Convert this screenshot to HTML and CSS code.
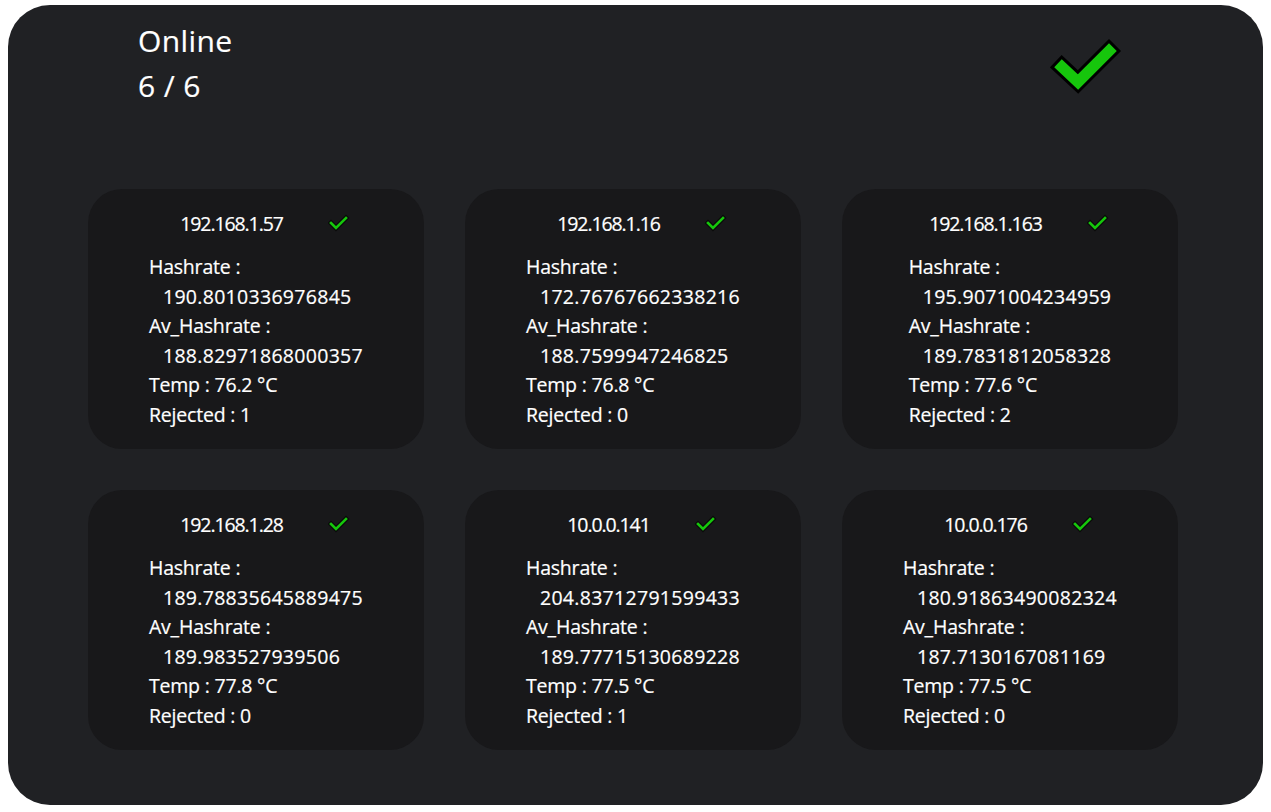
FILE: index.html
```html
<!DOCTYPE html>
<html>
<head>
<meta charset="utf-8">
<link rel="stylesheet" href="styles.css">
</head>
<body>
<div class="panel">
  <div class="top">
    <div class="status">
      <div class="status-label">Online</div>
      <div class="status-count">6 / 6</div>
    </div>
    <svg class="big-check" width="76" height="62" viewBox="0 0 76 62">
      <polyline points="12,30 28,45 59,14" fill="none" stroke="#000" stroke-width="17" stroke-linecap="square" stroke-linejoin="miter"/>
      <polyline points="12,30 28,45 59,14" fill="none" stroke="#16c60c" stroke-width="11" stroke-linecap="square" stroke-linejoin="miter"/>
    </svg>
  </div>
  <div class="grid">
    <div class="card">
      <div class="card-head"><span class="ip">192.168.1.57</span><svg class="chk" width="22" height="18" viewBox="0 0 22 18"><polyline points="3,9 8,14 18,4" fill="none" stroke="#0a0a0a" stroke-width="5" stroke-linecap="square"/><polyline points="3,9 8,14 18,4" fill="none" stroke="#16c60c" stroke-width="2.6" stroke-linecap="square"/></svg></div>
      <div class="card-body">
        <div>Hashrate :</div>
        <div class="val">190.8010336976845</div>
        <div>Av_Hashrate :</div>
        <div class="val">188.82971868000357</div>
        <div>Temp : 76.2 °C</div>
        <div>Rejected : 1</div>
      </div>
    </div>
    <div class="card">
      <div class="card-head"><span class="ip">192.168.1.16</span><svg class="chk" width="22" height="18" viewBox="0 0 22 18"><polyline points="3,9 8,14 18,4" fill="none" stroke="#0a0a0a" stroke-width="5" stroke-linecap="square"/><polyline points="3,9 8,14 18,4" fill="none" stroke="#16c60c" stroke-width="2.6" stroke-linecap="square"/></svg></div>
      <div class="card-body">
        <div>Hashrate :</div>
        <div class="val">172.76767662338216</div>
        <div>Av_Hashrate :</div>
        <div class="val">188.7599947246825</div>
        <div>Temp : 76.8 °C</div>
        <div>Rejected : 0</div>
      </div>
    </div>
    <div class="card">
      <div class="card-head"><span class="ip">192.168.1.163</span><svg class="chk" width="22" height="18" viewBox="0 0 22 18"><polyline points="3,9 8,14 18,4" fill="none" stroke="#0a0a0a" stroke-width="5" stroke-linecap="square"/><polyline points="3,9 8,14 18,4" fill="none" stroke="#16c60c" stroke-width="2.6" stroke-linecap="square"/></svg></div>
      <div class="card-body">
        <div>Hashrate :</div>
        <div class="val">195.9071004234959</div>
        <div>Av_Hashrate :</div>
        <div class="val">189.7831812058328</div>
        <div>Temp : 77.6 °C</div>
        <div>Rejected : 2</div>
      </div>
    </div>
    <div class="card">
      <div class="card-head"><span class="ip">192.168.1.28</span><svg class="chk" width="22" height="18" viewBox="0 0 22 18"><polyline points="3,9 8,14 18,4" fill="none" stroke="#0a0a0a" stroke-width="5" stroke-linecap="square"/><polyline points="3,9 8,14 18,4" fill="none" stroke="#16c60c" stroke-width="2.6" stroke-linecap="square"/></svg></div>
      <div class="card-body">
        <div>Hashrate :</div>
        <div class="val">189.78835645889475</div>
        <div>Av_Hashrate :</div>
        <div class="val">189.983527939506</div>
        <div>Temp : 77.8 °C</div>
        <div>Rejected : 0</div>
      </div>
    </div>
    <div class="card">
      <div class="card-head"><span class="ip">10.0.0.141</span><svg class="chk" width="22" height="18" viewBox="0 0 22 18"><polyline points="3,9 8,14 18,4" fill="none" stroke="#0a0a0a" stroke-width="5" stroke-linecap="square"/><polyline points="3,9 8,14 18,4" fill="none" stroke="#16c60c" stroke-width="2.6" stroke-linecap="square"/></svg></div>
      <div class="card-body">
        <div>Hashrate :</div>
        <div class="val">204.83712791599433</div>
        <div>Av_Hashrate :</div>
        <div class="val">189.77715130689228</div>
        <div>Temp : 77.5 °C</div>
        <div>Rejected : 1</div>
      </div>
    </div>
    <div class="card">
      <div class="card-head"><span class="ip">10.0.0.176</span><svg class="chk" width="22" height="18" viewBox="0 0 22 18"><polyline points="3,9 8,14 18,4" fill="none" stroke="#0a0a0a" stroke-width="5" stroke-linecap="square"/><polyline points="3,9 8,14 18,4" fill="none" stroke="#16c60c" stroke-width="2.6" stroke-linecap="square"/></svg></div>
      <div class="card-body">
        <div>Hashrate :</div>
        <div class="val">180.91863490082324</div>
        <div>Av_Hashrate :</div>
        <div class="val">187.7130167081169</div>
        <div>Temp : 77.5 °C</div>
        <div>Rejected : 0</div>
      </div>
    </div>
  </div>
</div>
</body>
</html>
```

FILE: styles.css
```css
html, body {
  background: #ffffff;
}
body {
  margin: 5px 8px 7px 8px;
  font-family: "Open Sans", "DejaVu Sans", sans-serif;
  font-weight: 500;
  color: #ffffff;
  -webkit-text-stroke: 0.2px #ffffff;
}
.panel {
  box-sizing: border-box;
  width: 1255px;
  height: 800px;
  background: #202124;
  border-radius: 42px;
  padding: 13px 0 0 80px;
}
.top {
  display: flex;
  justify-content: space-between;
  align-items: flex-start;
  padding-left: 50px;
  padding-right: 137px;
  height: 171px;
}
.status-label, .status-count {
  font-size: 30px;
  line-height: 45px;
  letter-spacing: 0.4px;
}
.big-check {
  margin-top: 19px;
}
.grid {
  display: grid;
  grid-template-columns: repeat(3, 336px);
  grid-auto-rows: 260px;
  column-gap: 41px;
  row-gap: 41px;
}
.card {
  background: #18181a;
  border-radius: 34px;
  padding-top: 20px;
  display: flex;
  flex-direction: column;
  align-items: center;
}
.card-head {
  display: flex;
  align-items: center;
  gap: 45px;
  height: 28px;
  padding-left: 18px;
}
.ip {
  font-size: 19.5px;
  letter-spacing: -1.1px;
}
.chk {
  display: block;
  margin-top: -1px;
}
.card-body {
  margin-top: 15px;
  font-size: 19.5px;
  line-height: 29.6px;
  letter-spacing: -0.2px;
}
.val {
  padding-left: 14px;
  letter-spacing: 0.3px;
}
```
